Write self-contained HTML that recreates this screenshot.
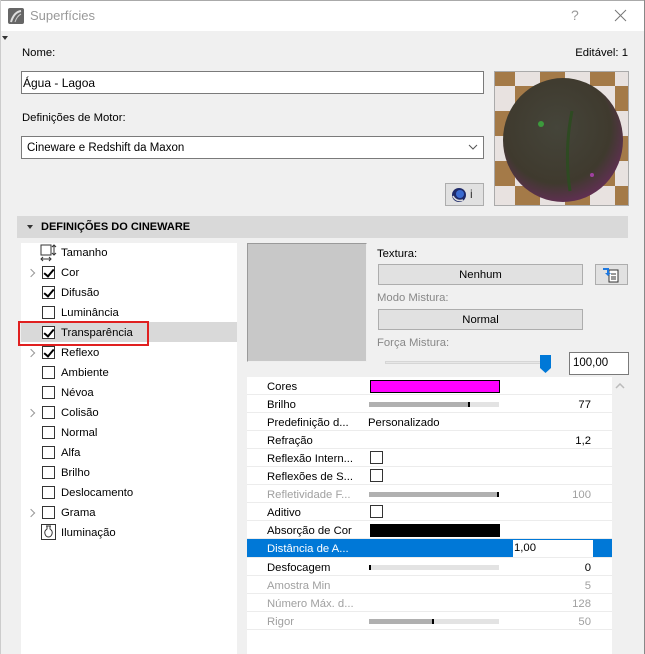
<!DOCTYPE html>
<html><head><meta charset="utf-8"><style>
*{box-sizing:border-box;margin:0;padding:0}
body{width:645px;height:654px;overflow:hidden;background:#f0f0f0;font-family:"Liberation Sans",sans-serif;font-size:11.3px;color:#000;position:relative}
.a{position:absolute;white-space:nowrap}
.cb{position:absolute;width:13px;height:13px;border:1px solid #333;background:#fff}
.cb.on::after{content:"";position:absolute;left:3px;top:0px;width:4px;height:8px;border:solid #000;border-width:0 2px 2px 0;transform:rotate(40deg)}
.chev{position:absolute;width:6px;height:6px;border:solid #999;border-width:1.5px 1.5px 0 0;transform:rotate(45deg)}
.btn{position:absolute;background:#e1e1e1;border:1px solid #adadad;text-align:center}
.row{position:absolute;left:247px;width:365px;height:18px;border-bottom:1px solid #ececec}
.row .l{position:absolute;left:20px;top:4px}
.row .v{position:absolute;right:21px;top:4px}
.g{color:#a0a0a0}
.bar{position:absolute;left:122px;top:7px;width:130px;height:5px;background:#e3e3e3}
.bar i{position:absolute;left:0;top:0;height:5px;background:#b0b0b0;border-right:2px solid #000}
.rcb{position:absolute;left:123px;top:2px;width:13px;height:13px;border:1px solid #333;background:#fff}
.li{position:absolute;left:61px}
</style></head><body>
<div class="a" style="left:0;top:0;width:645px;height:31px;background:#fff;border-top:1px solid #aaa"></div>
<div class="a" style="left:644px;top:0;width:1px;height:654px;background:#888"></div>
<div class="a" style="left:0;top:0;width:1px;height:654px;background:#ccc"></div>
<svg class="a" style="left:8px;top:8px" width="16" height="16"><rect x="0" y="0" width="16" height="16" rx="2" fill="#666"/><path d="M3 14 Q6 4 13 3" stroke="#ddd" stroke-width="2" fill="none"/><path d="M7 14 Q9 8 13 6" stroke="#ccc" stroke-width="1" fill="none"/></svg>
<div class="a" style="left:30px;top:8px;font-size:13px;color:#999">Superfícies</div>
<div class="a" style="left:571px;top:7px;font-size:14px;color:#999">?</div>
<svg class="a" style="left:614px;top:9px" width="13" height="13"><path d="M1 1L12 12M12 1L1 12" stroke="#777" stroke-width="1"/></svg>
<div class="a" style="left:2px;top:36px;width:0;height:0;border-left:3px solid transparent;border-right:3px solid transparent;border-top:4px solid #333"></div>

<div class="a" style="left:22px;top:47px">Nome:</div>
<div class="a" style="right:17px;top:47px">Editável: 1</div>
<div class="a" style="left:21px;top:71px;width:463px;height:23px;background:#fff;border:1px solid #7a7a7a;padding:4px 0 0 1px;font-size:12px">Água - Lagoa</div>
<div class="a" style="left:22px;top:112px">Definições de Motor:</div>
<div class="a" style="left:21px;top:136px;width:463px;height:23px;background:#fff;border:1px solid #7a7a7a;padding:5px 0 0 5px;font-size:11.5px">Cineware e Redshift da Maxon</div>
<svg class="a" style="left:468px;top:144px" width="10" height="7"><path d="M1 1L5 5L9 1" stroke="#555" fill="none"/></svg>
<div class="btn" style="left:445px;top:183px;width:39px;height:23px"></div>
<svg class="a" style="left:451px;top:187px" width="16" height="16"><circle cx="8" cy="8" r="7" fill="#1e2a6a"/><circle cx="9" cy="7" r="4" fill="#3a6ad0"/><path d="M2 9 Q5 15 12 13" stroke="#ddd" stroke-width="1.5" fill="none"/></svg>
<div class="a" style="left:470px;top:187px;font-size:12px;color:#333">i</div>

<svg class="a" style="left:494px;top:71px" width="135" height="135">
<defs><clipPath id="c"><rect x="1" y="1" width="133" height="133"/></clipPath><pattern id="ck" width="50" height="50" patternUnits="userSpaceOnUse" x="-4" y="-10"><rect width="50" height="50" fill="#e8e2e0"/><rect width="25" height="25" fill="#a47a48"/><rect x="25" y="25" width="25" height="25" fill="#a47a48"/></pattern><radialGradient id="sp" cx="0.45" cy="0.4" r="0.6"><stop offset="0" stop-color="#45453a"/><stop offset="0.75" stop-color="#3f3a2e"/><stop offset="1" stop-color="#5e3050"/></radialGradient></defs>
<rect width="135" height="135" fill="#aaa"/>
<g clip-path="url(#c)"><rect x="1" y="1" width="133" height="133" fill="url(#ck)"/>
<ellipse cx="69" cy="69" rx="60" ry="62" fill="url(#sp)"/>
<path d="M78 40 Q70 80 76 120" stroke="#2e4a22" stroke-width="3" fill="none"/>
<circle cx="47" cy="53" r="3" fill="#3c9a3c"/><circle cx="98" cy="104" r="2" fill="#a040a0"/></g>
</svg>

<div class="a" style="left:17px;top:216px;width:611px;height:22px;background:#d9d9d9"></div>
<div class="a" style="left:27px;top:225px;width:0;height:0;border-left:3.5px solid transparent;border-right:3.5px solid transparent;border-top:4px solid #333"></div>
<div class="a" style="left:41px;top:221px;font-weight:bold;font-size:11px">DEFINIÇÕES DO CINEWARE</div>

<div class="a" style="left:21px;top:243px;width:216px;height:411px;background:#fff"></div>
<div class="a" style="left:21px;top:322px;width:216px;height:20px;background:#d9d9d9"></div>
<div class="a" style="left:18px;top:321px;width:131px;height:25px;border:2px solid #e02020"></div>
<svg class="a" style="left:40px;top:244px" width="18" height="18"><rect x="1" y="1" width="10" height="10" fill="none" stroke="#333"/><path d="M14 1V11M12 3L14 1L16 3M12 9L14 11L16 9M1 15H11M3 13L1 15L3 17M9 13L11 15L9 17" stroke="#333" fill="none"/></svg>
<div class="li" style="top:247px">Tamanho</div>
<div class="chev" style="left:28px;top:270px"></div><div class="cb on" style="left:42px;top:266px"></div><div class="li" style="top:267px">Cor</div>
<div class="cb on" style="left:42px;top:286px"></div><div class="li" style="top:287px">Difusão</div>
<div class="cb" style="left:42px;top:306px"></div><div class="li" style="top:307px">Luminância</div>
<div class="cb on" style="left:42px;top:326px"></div><div class="li" style="top:327px">Transparência</div>
<div class="chev" style="left:28px;top:350px"></div><div class="cb on" style="left:42px;top:346px"></div><div class="li" style="top:347px">Reflexo</div>
<div class="cb" style="left:42px;top:366px"></div><div class="li" style="top:367px">Ambiente</div>
<div class="cb" style="left:42px;top:386px"></div><div class="li" style="top:387px">Névoa</div>
<div class="chev" style="left:28px;top:410px"></div><div class="cb" style="left:42px;top:406px"></div><div class="li" style="top:407px">Colisão</div>
<div class="cb" style="left:42px;top:426px"></div><div class="li" style="top:427px">Normal</div>
<div class="cb" style="left:42px;top:446px"></div><div class="li" style="top:447px">Alfa</div>
<div class="cb" style="left:42px;top:466px"></div><div class="li" style="top:467px">Brilho</div>
<div class="cb" style="left:42px;top:486px"></div><div class="li" style="top:487px">Deslocamento</div>
<div class="chev" style="left:28px;top:510px"></div><div class="cb" style="left:42px;top:506px"></div><div class="li" style="top:507px">Grama</div>
<svg class="a" style="left:41px;top:524px" width="15" height="16"><rect x="0.5" y="0.5" width="14" height="15" fill="none" stroke="#333"/><path d="M5 2H10M6 2V5Q3 7 4 10Q5 13 7.5 13Q10 13 11 10Q12 7 9 5V2" stroke="#333" fill="none"/></svg>
<div class="li" style="top:527px">Iluminação</div>

<div class="a" style="left:247px;top:243px;width:120px;height:119px;background:#c8c8c8;border:1px solid #9a9a9a;border-bottom-color:#eee;border-right-color:#eee"></div>
<div class="a" style="left:377px;top:248px">Textura:</div>
<div class="btn" style="left:378px;top:264px;width:205px;height:21px;padding-top:4px">Nenhum</div>
<div class="btn" style="left:595px;top:264px;width:33px;height:21px"></div>
<svg class="a" style="left:602px;top:266px" width="18" height="17"><rect x="7" y="4" width="9" height="12" fill="#fff" stroke="#333"/><path d="M9 8H14M9 11H14M9 13H14" stroke="#333"/><path d="M1 3H6V8" stroke="#1e78e0" stroke-width="2" fill="none"/><path d="M3 7L6 10L9 7Z" fill="#1e78e0"/></svg>
<div class="a" style="left:377px;top:292px;color:#888">Modo Mistura:</div>
<div class="btn" style="left:378px;top:309px;width:205px;height:21px;padding-top:4px">Normal</div>
<div class="a" style="left:377px;top:337px;color:#888">Força Mistura:</div>
<div class="a" style="left:385px;top:361px;width:160px;height:3px;background:#e7e7e7;border:1px solid #d6d6d6"></div>
<svg class="a" style="left:539px;top:355px" width="13" height="19"><path d="M1 0H12V13L6.5 18L1 13Z" fill="#0078d7"/></svg>
<div class="a" style="left:569px;top:352px;width:60px;height:23px;background:#fff;border:1px solid #7a7a7a;padding:4px 0 0 3px;font-size:11.5px">100,00</div>

<div class="a" style="left:247px;top:377px;width:365px;height:277px;background:#fff"></div>
<svg class="a" style="left:615px;top:383px" width="10" height="7"><path d="M1 5L5 1L9 5" stroke="#bbb" fill="none" stroke-width="1.5"/></svg>
<div class="row" style="top:377px"><span class="l">Cores</span><div style="position:absolute;left:123px;top:3px;width:130px;height:13px;background:#ff00ff;border:1px solid #000"></div></div>
<div class="row" style="top:395px"><span class="l">Brilho</span><div class="bar"><i style="width:101px"></i></div><span class="v">77</span></div>
<div class="row" style="top:413px"><span class="l">Predefinição d...</span><span style="position:absolute;left:121px;top:4px">Personalizado</span></div>
<div class="row" style="top:431px"><span class="l">Refração</span><span class="v">1,2</span></div>
<div class="row" style="top:449px"><span class="l">Reflexão Intern...</span><div class="rcb"></div></div>
<div class="row" style="top:467px"><span class="l">Reflexões de S...</span><div class="rcb"></div></div>
<div class="row g" style="top:485px"><span class="l">Refletividade F...</span><div class="bar"><i style="width:130px"></i></div><span class="v">100</span></div>
<div class="row" style="top:503px"><span class="l">Aditivo</span><div class="rcb"></div></div>
<div class="row" style="top:521px"><span class="l">Absorção de Cor</span><div style="position:absolute;left:123px;top:3px;width:130px;height:13px;background:#000"></div></div>
<div class="row" style="top:539px;background:#0078d7;color:#fff;height:19px"><span class="l">Distância de A...</span><div style="position:absolute;left:266px;top:1px;width:80px;height:17px;background:#fff;color:#000;padding:2px 0 0 1px">1,00</div></div>
<div class="row" style="top:558px"><span class="l">Desfocagem</span><div class="bar"><i style="width:2px"></i></div><span class="v">0</span></div>
<div class="row g" style="top:576px"><span class="l">Amostra Min</span><span class="v">5</span></div>
<div class="row g" style="top:594px"><span class="l">Número Máx. d...</span><span class="v">128</span></div>
<div class="row g" style="top:612px"><span class="l">Rigor</span><div class="bar"><i style="width:65px"></i></div><span class="v">50</span></div>
</body></html>
